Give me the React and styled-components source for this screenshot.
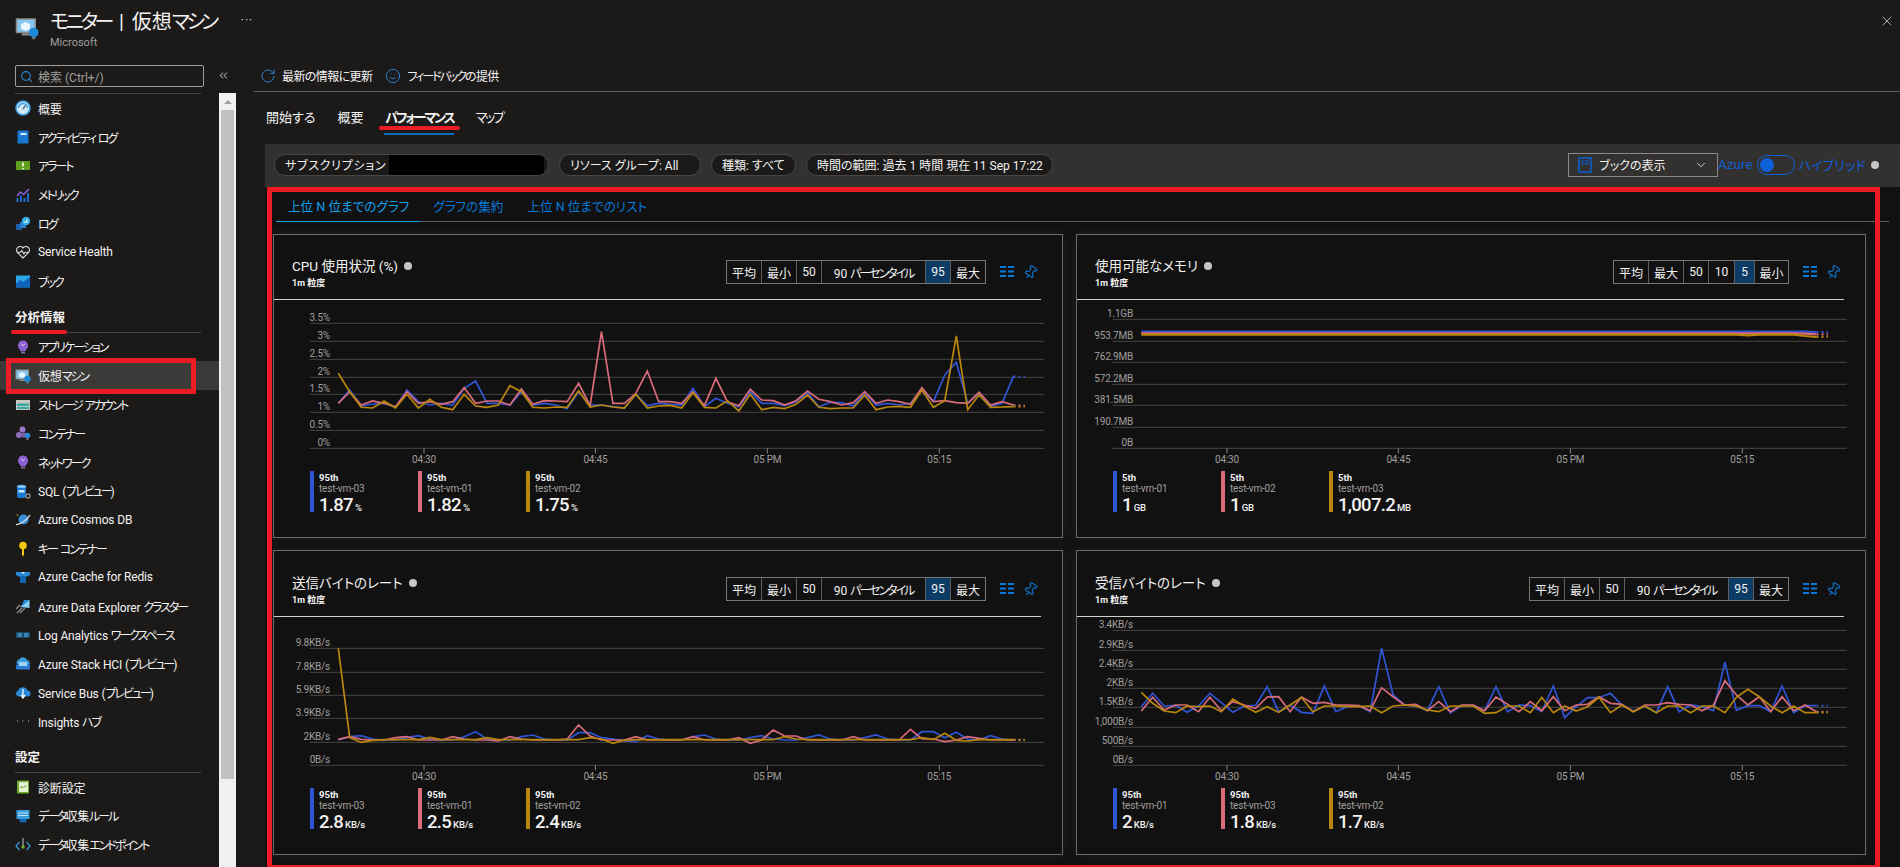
import React from 'react';
import styled, { createGlobalStyle } from 'styled-components';
import { X, ChevronDown, Search, RotateCw, Smile, Pin, ChevronsLeft } from 'lucide-react';

const GlobalStyle = createGlobalStyle`
  html, body { margin: 0; height: 100%; background: #1b1a19; overflow: hidden; }
  body {
    font-family: Roboto, "Noto Sans CJK JP", sans-serif;
    color: #f3f2f1;
    font-feature-settings: "palt";
  }
`;

const BLUE = '#2f55d4';
const PINK = '#d96b7b';
const GOLD = '#b8860b';

// Style
const Page = styled.div`
  display: flex;
  flex-direction: column;
  width: 1900px;
  height: 867px;
  overflow: hidden;
`;
const Kana = styled.span`
  letter-spacing: -0.17em;
`;
const Header = styled.header`
  display: flex;
  align-items: flex-start;
  height: 60px;
  box-sizing: border-box;
  padding: 8px 5px 0 15px;
`;
const HeaderIcon = styled.div`
  width: 24px;
  height: 28px;
  margin: 8px 11px 0 0;
`;
const Title = styled.h1`
  margin: 0;
  font-size: 20px;
  font-weight: 400;
  line-height: 28px;
  word-spacing: 3px;
  white-space: nowrap;
`;
const SubTitle = styled.div`
  font-size: 11px;
  line-height: 14px;
  color: #a19f9d;
`;
const More = styled.span`
  margin: 2px auto 0 25px;
  font-size: 12px;
  line-height: 20px;
  letter-spacing: 1px;
  color: #d2d0ce;
`;
const Close = styled(X)`
  margin-top: 5px;
  color: #d2d0ce;
`;
const Body = styled.div`
  display: flex;
  flex: 1;
  min-height: 0;
`;
const Sidebar = styled.aside`
  display: flex;
  flex-direction: column;
  width: 236px;
  flex: none;
`;
const SearchRow = styled.div`
  display: flex;
  align-items: flex-start;
  height: 33px;
  box-sizing: border-box;
  padding: 5px 0 0 15px;
`;
const SearchBox = styled.div`
  display: flex;
  align-items: center;
  gap: 5px;
  width: 189px;
  height: 22px;
  box-sizing: border-box;
  padding-left: 4px;
  border: 1px solid #a19f9d;
  border-radius: 2px;
  font-size: 12px;
  color: #a19f9d;
`;
const Collapse = styled(ChevronsLeft)`
  margin: 4px 0 0 13px;
  color: #8a8886;
`;
const SideBody = styled.div`
  display: flex;
  flex: 1;
  min-height: 0;
`;
const Nav = styled.nav`
  width: 219px;
  flex: none;
`;
const TopRule = styled.div`
  height: 1px;
  margin: 0 18px 0 15px;
  background: #484644;
`;
const NavItem = styled.div`
  position: relative;
  display: flex;
  align-items: center;
  gap: 7px;
  height: 28.8px;
  padding-left: 15px;
  font-size: 12px;
  letter-spacing: -0.15px;
  white-space: nowrap;
  background: ${p => (p.$selected ? '#3b3a39' : 'transparent')};
`;
const Section = styled.div`
  position: relative;
  display: flex;
  align-items: flex-end;
  height: 37px;
  margin: 0 18px 0 15px;
  padding-bottom: 6px;
  box-sizing: border-box;
  font-size: 12.5px;
  font-weight: 700;
  border-bottom: 1px solid #484644;
`;
const SectionMark = styled.span`
  position: absolute;
  left: -4px;
  bottom: -2px;
  width: 56px;
  height: 4px;
  border-radius: 2px;
  background: #ed1c24;
`;
const RedBox = styled.span`
  position: absolute;
  left: 6px;
  top: -3px;
  width: 190px;
  height: 36px;
  box-sizing: border-box;
  border: 5px solid #ed1c24;
`;
const Scrollbar = styled.div`
  position: relative;
  flex: 1;
  background: #f1f1f1;
`;
const ScrollArrow = styled.span`
  position: absolute;
  top: 7px;
  left: 5px;
  border: 4px solid transparent;
  border-top: 0;
  border-bottom: 4px solid #a3a3a3;
`;
const ScrollThumb = styled.div`
  position: absolute;
  top: 17px;
  left: 2px;
  width: 13px;
  height: 669px;
  background: #c1c1c1;
`;
const Main = styled.main`
  display: flex;
  flex: 1;
  flex-direction: column;
  min-width: 0;
`;
const Toolbar = styled.div`
  display: flex;
  align-items: center;
  height: 31px;
  margin-left: 18px;
  padding: 0 0 0 6px;
  border-bottom: 1px solid #605e5c;
  font-size: 12px;
`;
const ToolButton = styled.span`
  display: flex;
  align-items: center;
  gap: 6px;
  margin-right: 13px;
  letter-spacing: -0.6px;
  & svg { color: #2b88d8; }
`;
const TabRow = styled.div`
  display: flex;
  align-items: flex-start;
  gap: 22px;
  height: 52px;
  box-sizing: border-box;
  padding: 16px 0 0 30px;
  font-size: 13px;
`;
const Tab = styled.span`
  position: relative;
  display: block;
  line-height: 20px;
  font-weight: ${p => (p.$active ? 600 : 400)};
`;
const TabLine = styled.span`
  position: absolute;
  left: -1px;
  right: 0;
  top: 25px;
  height: 2px;
  background: #0f6cbd;
`;
const TabMark = styled.span`
  position: absolute;
  left: -6px;
  right: -6px;
  top: 18px;
  height: 4px;
  border-radius: 2px;
  background: #ed1c24;
`;
const Content = styled.div`
  display: flex;
  flex: 1;
  flex-direction: column;
  margin-left: 29px;
  min-height: 0;
`;
const FilterBar = styled.div`
  display: flex;
  align-items: center;
  height: 43px;
  flex: none;
  box-sizing: border-box;
  padding: 0 21px 2px 9px;
  background: #323130;
`;
const Pill = styled.span`
  display: flex;
  align-items: center;
  height: 22px;
  flex: none;
  box-sizing: border-box;
  margin-right: 10px;
  padding: 0 10px;
  width: ${p => p.$w}px;
  border: 1px solid #484644;
  border-radius: 11px;
  background: #1b1a19;
  font-size: 12px;
  letter-spacing: ${p => p.$ls || 0}px;
  white-space: nowrap;
  overflow: hidden;
`;
const Redacted = styled.span`
  flex: none;
  width: 155px;
  height: 22px;
  margin-left: auto;
  margin-right: -6px;
  background: #000;
`;
const BookSelect = styled.div`
  display: flex;
  align-items: center;
  flex: none;
  width: 150px;
  height: 24px;
  box-sizing: border-box;
  margin-left: auto;
  padding: 0 9px;
  border: 1px solid #8a8886;
  font-size: 12px;
  gap: 7px;
  & > svg:last-child { margin-left: auto; }
`;
const ModeLabel = styled.span`
  font-size: 13px;
  letter-spacing: 0.2px;
  color: #0f5fd6;
  white-space: nowrap;
`;
const Toggle = styled.span`
  display: flex;
  align-items: center;
  flex: none;
  width: 38px;
  height: 20px;
  box-sizing: border-box;
  margin: 0 4px;
  padding-left: 2px;
  border: 1px solid #0f5fd6;
  border-radius: 10px;
`;
const Knob = styled.span`
  width: 14px;
  height: 14px;
  border-radius: 50%;
  background: #0f5fd6;
`;
const Dot = styled.span`
  flex: none;
  width: 8px;
  height: 8px;
  margin-left: ${p => p.$gap}px;
  border-radius: 50%;
  background: #c8c6c4;
`;
const Panel = styled.section`
  position: relative;
  flex: 1;
  padding: 0 0 0 8px;
  background: #111;
`;
const RedFrame = styled.div`
  position: absolute;
  left: 2px;
  right: 20px;
  top: 0;
  bottom: -3px;
  border: 5px solid #ed1c24;
  pointer-events: none;
  z-index: 2;
`;
const SubTabs = styled.div`
  display: flex;
  height: 34px;
  margin: 0 11px 0 3px;
  border-bottom: 1px solid #605e5c;
  font-size: 12.6px;
`;
const SubTab = styled.span`
  position: relative;
  display: flex;
  align-items: center;
  padding: 2px 12px 0;
  color: ${p => (p.$active ? '#12a0e8' : '#0a78d6')};
  white-space: nowrap;
  ${p => p.$active && 'box-shadow: 0 1px 0 #12a0e8;'}
`;
const Grid = styled.div`
  display: grid;
  grid-template-columns: 1fr 1fr;
  grid-template-rows: 304px 305px;
  gap: 12px 13px;
  width: 1593px;
  margin-top: 12px;
`;
const Card = styled.article`
  display: flex;
  flex-direction: column;
  box-sizing: border-box;
  border: 1px solid #6a6a6a;
  background: #111;
  box-shadow: 0 0 12px rgba(255, 255, 255, 0.07);
`;
const CardHead = styled.div`
  display: flex;
  justify-content: space-between;
  height: ${p => p.$h}px;
  flex: none;
  margin-right: 21px;
  border-bottom: 1px solid #d0d0d0;
`;
const CardTitleBox = styled.div`
  padding: ${p => p.$h - 42}px 0 0 18px;
`;
const CardTitle = styled.div`
  display: flex;
  align-items: center;
  font-size: 13.5px;
  line-height: 18px;
`;
const Grain = styled.div`
  margin-top: 2px;
  font-size: 9px;
  font-weight: 700;
  line-height: 12px;
`;
const CardTools = styled.div`
  display: flex;
  align-items: center;
  align-self: flex-start;
  margin-top: ${p => p.$h - 39}px;
  padding-right: 3px;
`;
const Segs = styled.div`
  display: flex;
  height: 24px;
  box-sizing: border-box;
  border: 1px solid #797775;
  margin-right: 14px;
`;
const Seg = styled.span`
  display: flex;
  align-items: center;
  justify-content: center;
  box-sizing: border-box;
  width: ${p => p.$w}px;
  flex: none;
  font-size: 12px;
  white-space: nowrap;
  background: ${p => (p.$on ? '#0c3b66' : 'transparent')};
  & + & { border-left: 1px solid #605e5c; }
`;
const PinIcon = styled(Pin)`
  margin-left: 9px;
  color: #0f6cbd;
  transform: rotate(35deg);
`;
const ChartSvg = styled.svg`
  display: block;
  flex: none;
`;
const AxisText = styled.text`
  font-size: 10px;
  fill: #a19f9d;
  letter-spacing: -0.2px;
`;
const Legend = styled.div`
  display: flex;
  padding-left: 36px;
`;
const LegendItem = styled.div`
  display: flex;
  gap: 5px;
  width: 108px;
  height: 41px;
`;
const LegendBar = styled.span`
  width: 4px;
  background: ${p => p.$color};
`;
const LegendPct = styled.div`
  font-size: 9.5px;
  font-weight: 700;
  line-height: 11px;
  margin-top: 1px;
`;
const LegendName = styled.div`
  font-size: 10px;
  line-height: 11px;
  color: #a19f9d;
  letter-spacing: -0.2px;
`;
const LegendValue = styled.div`
  margin-top: 1px;
  font-size: 18.5px;
  font-weight: 500;
  line-height: 20px;
  letter-spacing: -0.7px;
  white-space: nowrap;
`;
const LegendUnit = styled.span`
  margin-left: 2px;
  font-size: 9.5px;
  letter-spacing: -0.2px;
`;

// Katakana runs get squeezed, the reference font sets them narrow
const Jp = ({ text }) =>
  text.split(/([ァ-ヶー]+)/).map((part, i) => (i % 2 ? <Kana key={i}>{part}</Kana> : part));

// Sidebar icons, drawn on a 16 box
const icons = {
  gauge: (
    <>
      <circle cx="8" cy="8" r="7" fill="#cfe8f8" stroke="#3a9bdc" strokeWidth="1.6" />
      <path d="M3.5 8a4.5 4.5 0 0 1 9 0" fill="none" stroke="#3a9bdc" strokeWidth="1.5" />
      <path d="M8 9l2.5-3.5" stroke="#666" strokeWidth="1.3" />
    </>
  ),
  book: (
    <>
      <rect x="2.5" y="1.5" width="11" height="13" rx="1" fill="#1b79d2" />
      <rect x="5.5" y="4" width="6" height="2" fill="#d5ecfb" />
    </>
  ),
  alert: (
    <>
      <rect x="1" y="3" width="14" height="9" fill="#5e9f1e" />
      <path d="M8 4.5v4M8 10v1.3" stroke="#fff" strokeWidth="1.5" />
    </>
  ),
  metric: (
    <>
      <path d="M2 9l3.5-4 3 2.5L14 2" fill="none" stroke="#8c5fd6" strokeWidth="1.6" />
      <path d="M2.5 15v-4M6 15V8.5M9.5 15v-4M13 15V6" stroke="#1b6fc2" strokeWidth="2" />
    </>
  ),
  log: (
    <>
      <rect x="1" y="8" width="6" height="6" fill="#1c5fa8" />
      <rect x="5" y="6" width="6" height="6" fill="#2b7cd3" />
      <circle cx="11" cy="5" r="4.2" fill="#34b0e6" />
      <path d="M10 7V5M12 7V3" stroke="#fff" strokeWidth="1" />
    </>
  ),
  heart: (
    <path
      d="M8 14L2.2 8.2A3.4 3.4 0 0 1 8 4a3.4 3.4 0 0 1 5.8 4.2L8 14zM2.5 8.3h3l1.3-1.8 2 3.2 1.2-1.4h3.5"
      fill="none"
      stroke="#e1dfdd"
      strokeWidth="1.1"
    />
  ),
  workbook: (
    <>
      <rect x="1" y="2.5" width="14" height="12" fill="#2aa7e8" />
      <path d="M1 11l4-4 3 2 7-5v10.500H1z" fill="#0f62b8" />
    </>
  ),
  bulb: (
    <>
      <path d="M8 1.500a5 5 0 0 1 3 9v1.500H5v-1.500a5 5 0 0 1 3-9z" fill="#8a5fd1" />
      <path d="M6 4.500l2 2.500 2-2.500" fill="none" stroke="#d9c8f2" strokeWidth="1" />
      <rect x="6" y="12.500" width="4" height="2" fill="#7a6a96" />
    </>
  ),
  vm: (
    <>
      <rect x="1" y="2" width="12.500" height="9" fill="#87c7ee" stroke="#8a8a8a" />
      <path d="M7 4l3 1.500v3L7 10 4 8.500v-3z" fill="#e9f6ff" />
      <rect x="4.500" y="11.500" width="5.500" height="1.500" fill="#8a8a8a" />
      <circle cx="12.500" cy="11" r="3.200" fill="#1b8ad6" />
      <rect x="11.500" y="14" width="2" height="1.500" fill="#777" />
    </>
  ),
  storage: (
    <>
      <rect x="1" y="3" width="14" height="10" fill="#c8c6c4" />
      <rect x="2" y="6.500" width="12" height="2.500" fill="#38a9a4" />
      <rect x="2" y="10" width="12" height="2" fill="#38a9a4" />
    </>
  ),
  containers: (
    <>
      <circle cx="7.500" cy="4.500" r="3" fill="#9a78c8" />
      <circle cx="4" cy="10" r="3" fill="#8e6cbc" />
      <circle cx="9" cy="10" r="2.600" fill="#7a5ca8" />
      <circle cx="12.500" cy="10.500" r="2.800" fill="#2b8ad6" />
      <rect x="11.500" y="13" width="2" height="2" fill="#777" />
    </>
  ),
  sql: (
    <>
      <path d="M2 3.500c0-2.300 9-2.300 9 0v10c0 2-9 2-9 0z" fill="#1b79d2" />
      <ellipse cx="6.500" cy="3.500" rx="4.500" ry="1.500" fill="#7fc4f0" />
      <rect x="3.500" y="7" width="6" height="2.500" fill="#cde8fb" />
      <circle cx="13" cy="13" r="2" fill="none" stroke="#8a8886" strokeWidth="1.400" />
    </>
  ),
  cosmos: (
    <>
      <circle cx="8.500" cy="7.500" r="5" fill="#3a8fd9" />
      <path d="M1 12.500C4 13 12 8.500 15 3" fill="none" stroke="#e1dfdd" strokeWidth="1.300" />
      <circle cx="2.500" cy="3" r=".8" fill="#dcc94a" />
    </>
  ),
  key: (
    <>
      <circle cx="8" cy="4.500" r="3.800" fill="#f2c811" />
      <path d="M7 7h2v7l-1 1.300L7 14z" fill="#f2c811" />
    </>
  ),
  redis: (
    <>
      <path d="M1 3h14v3l-4 2H5L1 6z" fill="#2b88d8" />
      <path d="M5 7h6v7H5z" fill="#1464b4" />
      <path d="M6 3l2 2 2-2" fill="#d5ecfb" />
    </>
  ),
  adx: (
    <>
      <path d="M5 9L14.500 1.500V10z" fill="#8ad0f5" />
      <path d="M9 2h5.500L6 9z" fill="#2b88d8" />
      <path d="M2 15l5-5M5 15l5-5M1 11l4-4" stroke="#8a8886" strokeWidth="1.400" />
    </>
  ),
  la: (
    <>
      <rect x="1" y="5" width="14" height="6" fill="#15466e" />
      <path d="M2.500 7h4.500M9 7h4.500M2.500 9h4.500M9 9h4.500" stroke="#6fbcec" strokeWidth="1" />
    </>
  ),
  hci: (
    <>
      <path d="M3 9a3 3 0 0 1 1-5.500A4.500 4.500 0 0 1 12 4a3 3 0 0 1 2 5z" fill="#3a9bdc" />
      <rect x="1" y="8.500" width="14" height="5" rx="1.200" fill="#2b7cd3" />
      <rect x="4" y="6" width="8" height="4" fill="#9fd4f5" />
    </>
  ),
  bus: (
    <>
      <path d="M3.500 11.500a3 3 0 0 1-.5-5.800A5 5 0 0 1 12.500 5.500a3 3 0 0 1 0 6z" fill="#2b88d8" />
      <path d="M8 4v8M6 10l2 3 2-3" fill="none" stroke="#e7f4fd" strokeWidth="1.400" />
    </>
  ),
  dots: (
    <path d="M2 8h1M7.500 8h1M13 8h1" stroke="#c8c6c4" strokeWidth="1.200" />
  ),
  diag: (
    <>
      <rect x="2" y="1.500" width="12" height="13" fill="#6fa82e" />
      <rect x="4" y="3" width="9" height="10" fill="#e4f0d2" />
      <path d="M5 9l2-1.500 1.500 1L11 6.500" fill="none" stroke="#5e9f1e" strokeWidth="1" />
    </>
  ),
  dcr: (
    <>
      <rect x="1.500" y="2" width="13" height="9" fill="#3a9bdc" />
      <path d="M3 5h10M3 7.500h10" stroke="#bfe3f8" strokeWidth="1" />
      <path d="M4 11l1 3.500h6l1-3.500z" fill="#1464b4" />
    </>
  ),
  endpoint: (
    <>
      <path d="M4.500 5L1 9l3.500 4M11.500 5L15 9l-3.500 4" fill="none" stroke="#3a9bdc" strokeWidth="1.200" />
      <path d="M8 1v9" stroke="#d2d0ce" strokeWidth="1" />
      <circle cx="8" cy="10" r="1.800" fill="#6fa82e" />
    </>
  ),
};

const NavIcon = ({ name, size = 16 }) => (
  <svg width={size} height={size} viewBox="0 0 16 16" style={{ flex: 'none' }}>
    {icons[name]}
  </svg>
);

const ListIcon = () => (
  <svg width="14" height="12" viewBox="0 0 14 12">
    <path d="M0 1h6M8 1h6M0 5.500h6M8 5.500h6M0 10h6M8 10h6" stroke="#0a78d6" strokeWidth="2.200" />
  </svg>
);

const BookIcon = () => (
  <svg width="14" height="16" viewBox="0 0 14 16">
    <path d="M1 1h12v14H1zM1 4H0M1 8H0M1 12H0" fill="none" stroke="#0f5fd6" strokeWidth="1.500" />
    <rect x="4" y="4" width="6" height="3" fill="none" stroke="#0f5fd6" />
  </svg>
);

const navTop = [
  ['gauge', '概要'],
  ['book', 'アクティビティ ログ'],
  ['alert', 'アラート'],
  ['metric', 'メトリック'],
  ['log', 'ログ'],
  ['heart', 'Service Health'],
  ['workbook', 'ブック'],
];
const navInsights = [
  ['bulb', 'アプリケーション'],
  ['vm', '仮想マシン', true],
  ['storage', 'ストレージ アカウント'],
  ['containers', 'コンテナー'],
  ['bulb', 'ネットワーク'],
  ['sql', 'SQL (プレビュー)'],
  ['cosmos', 'Azure Cosmos DB'],
  ['key', 'キー コンテナー'],
  ['redis', 'Azure Cache for Redis'],
  ['adx', 'Azure Data Explorer クラスター'],
  ['la', 'Log Analytics ワークスペース'],
  ['hci', 'Azure Stack HCI (プレビュー)'],
  ['bus', 'Service Bus (プレビュー)'],
  ['dots', 'Insights ハブ'],
];
const navSettings = [
  ['diag', '診断設定'],
  ['dcr', 'データ収集ルール'],
  ['endpoint', 'データ収集エンドポイント'],
];

const renderNav = items =>
  items.map(([icon, label, selected]) => (
    <NavItem key={label} $selected={selected}>
      <NavIcon name={icon} />
      <span><Jp text={label} /></span>
      {selected && <RedBox />}
    </NavItem>
  ));

// Chart data is kept in the y units it was read off at (3 per pixel)
const flat = (base, bumps) => Array.from({ length: 61 }, (_, i) => bumps[i] ?? base);

const cpuSeries = [
  [BLUE, [505,465,513,507,505,517,465,500,510,505,510,460,438,505,505,510,470,510,505,510,521,470,510,510,515,519,478,512,505,508,510,460,515,490,505,515,470,505,505,512,500,473,515,502,503,513,473,510,505,510,505,465,500,420,382,505,475,513,505,424,425]],
  [PINK, [505,470,510,498,505,515,470,505,500,508,500,458,505,498,498,510,462,508,497,498,500,445,512,290,505,505,475,408,500,500,505,470,512,430,500,512,463,495,497,510,497,468,493,500,510,503,470,505,495,500,508,458,500,497,503,505,472,510,500,510,512]],
  [GOLD, [415,470,517,519,498,519,478,519,493,517,524,478,513,517,510,452,470,517,519,516,517,467,516,510,516,519,478,519,513,511,519,473,517,519,497,528,478,524,517,521,508,480,517,521,519,519,480,524,516,514,517,465,517,497,303,524,480,517,516,515,515]],
];
const memSeries = [
  [BLUE, flat(290, { 59: 291, 60: 291 })],
  [PINK, flat(295, { 58: 296, 59: 298, 60: 298 })],
  [GOLD, flat(299, { 53: 301, 58: 303, 59: 306, 60: 305 })],
];
const sentSeries = [
  [BLUE, flat(585, { 1: 575, 2: 572, 3: 582, 6: 578, 7: 572, 8: 582, 11: 575, 12: 560, 13: 582, 16: 575, 17: 570, 18: 582, 21: 563, 22: 563, 23: 578, 24: 582, 25: 588, 26: 590, 27: 572, 28: 582, 31: 575, 32: 570, 33: 582, 36: 578, 37: 572, 38: 582, 41: 578, 42: 570, 43: 582, 46: 578, 47: 570, 48: 582, 51: 560, 52: 560, 53: 578, 54: 562, 55: 582, 57: 572, 58: 582 })],
  [PINK, flat(585, { 0: 583, 1: 575, 2: 583, 5: 578, 6: 575, 7: 585, 10: 575, 11: 582, 14: 588, 15: 575, 16: 582, 20: 582, 21: 540, 22: 573, 26: 575, 31: 575, 35: 578, 36: 595, 37: 585, 38: 555, 39: 573, 40: 573, 45: 575, 50: 553, 51: 582, 52: 582, 53: 590, 55: 575, 56: 580 })],
  [GOLD, flat(584, { 0: 310, 1: 578, 2: 592, 3: 586, 8: 577, 13: 578, 22: 578, 23: 582, 24: 595, 25: 586, 39: 575, 40: 582, 51: 578, 53: 565, 54: 586, 55: 588 })],
];
const recvSeries = [
  [BLUE, [485,445,483,481,502,483,445,473,502,483,481,425,500,480,502,505,423,500,485,482,500,310,450,480,483,497,425,503,482,480,497,425,500,480,482,500,423,518,485,458,458,445,480,498,484,503,425,500,480,485,497,352,496,482,482,500,423,503,482,482,482]],
  [PINK, [498,457,495,480,480,500,457,497,470,480,490,456,455,500,456,475,472,480,480,482,497,428,455,480,478,497,470,500,480,480,497,456,478,500,470,497,455,497,480,478,455,475,478,500,480,480,473,478,480,497,480,407,450,480,455,500,455,497,480,500,500]],
  [GOLD, [442,475,498,503,483,485,483,500,462,483,502,485,502,480,457,500,483,483,485,485,483,503,483,480,483,495,500,483,483,483,505,503,483,483,503,457,503,483,498,485,457,503,480,500,483,503,483,483,503,483,483,503,457,433,455,483,503,483,503,503,503]],
];

// The last minute isn't final yet, so that segment goes dashed
const LAST = 60;
const px = i => (126 + 22.43 * i) / 1.96;
const toPoints = (values, top, from, to) =>
  values
    .slice(from, to)
    .map((v, i) => `${px(i + from).toFixed(1)},${((v - top) / 3).toFixed(1)}`)
    .join(' ');

const TICKS = [['04:30', 150], ['04:45', 321.4], ['05 PM', 493.4], ['05:15', 665.3]];

const Chart = ({ top, grid, series, width }) => {
  const base = grid[grid.length - 1][1];
  const bottom = (base - top) / 3;
  return (
    <ChartSvg width="772" height="171" viewBox="0 0 772 171">
      {grid.map(([label, y]) => (
        <g key={label}>
          <line x1="35.700" x2="770" y1={(y - top) / 3} y2={(y - top) / 3} stroke="#484644" />
          <AxisText x="56" y={(y - top) / 3 - 4.500} textAnchor="end" dominantBaseline="middle">
            {label}
          </AxisText>
        </g>
      ))}
      {TICKS.map(([label, x]) => (
        <g key={label}>
          <line x1={x} x2={x} y1={bottom} y2={bottom + 5} stroke="#8a8886" />
          <AxisText x={x} y={bottom + 12} textAnchor="middle" dominantBaseline="middle">
            {label}
          </AxisText>
        </g>
      ))}
      {series.map(([color, values]) => (
        <g key={color} fill="none" stroke={color} strokeWidth={width}>
          <polyline points={toPoints(values, top, 0, LAST)} />
          <polyline points={toPoints(values, top, LAST - 1, LAST + 1)} strokeDasharray="2 3" />
        </g>
      ))}
    </ChartSvg>
  );
};

const SEG_SETS = {
  p95: [['平均', 34], ['最小', 35], ['50', 25], ['90 パーセンタイル', 104], ['95', 25, true], ['最大', 35]],
  p5: [['平均', 34], ['最大', 35], ['50', 25], ['10', 26], ['5', 20, true], ['最小', 34]],
};

const MetricCard = ({ head, title, segs, grid, series, top, legend, lineWidth = 1.7 }) => (
  <Card>
    <CardHead $h={head}>
      <CardTitleBox $h={head}>
        <CardTitle>
          {title}
          <Dot $gap={6} />
        </CardTitle>
        <Grain>1m 粒度</Grain>
      </CardTitleBox>
      <CardTools $h={head}>
        <Segs>
          {SEG_SETS[segs].map(([label, w, on]) => (
            <Seg key={label} $w={w} $on={on}><span><Jp text={label} /></span></Seg>
          ))}
        </Segs>
        <ListIcon />
        <PinIcon size={15} />
      </CardTools>
    </CardHead>
    <Chart top={top} grid={grid} series={series} width={lineWidth} />
    <Legend>
      {legend.map(([color, pct, name, value, unit]) => (
        <LegendItem key={name}>
          <LegendBar $color={color} />
          <div>
            <LegendPct>{pct}</LegendPct>
            <LegendName>{name}</LegendName>
            <LegendValue>
              {value}
              <LegendUnit>{unit}</LegendUnit>
            </LegendValue>
          </div>
        </LegendItem>
      ))}
    </Legend>
  </Card>
);

const App = () => (
  <Page>
    <GlobalStyle />
    <Header>
      <HeaderIcon>
        <NavIcon name="vm" size={24} />
      </HeaderIcon>
      <div>
        <Title><Jp text="モニター | 仮想マシン" /></Title>
        <SubTitle>Microsoft</SubTitle>
      </div>
      <More>···</More>
      <Close size={16} strokeWidth={1.2} />
    </Header>
    <Body>
      <Sidebar>
        <SearchRow>
          <SearchBox>
            <Search size={13} color="#2b88d8" />
            検索 (Ctrl+/)
          </SearchBox>
          <Collapse size={13} />
        </SearchRow>
        <SideBody>
          <Nav>
            <TopRule />
            {renderNav(navTop)}
            <Section>
              分析情報
              <SectionMark />
            </Section>
            {renderNav(navInsights)}
            <Section>設定</Section>
            {renderNav(navSettings)}
          </Nav>
          <Scrollbar>
            <ScrollArrow />
            <ScrollThumb />
          </Scrollbar>
        </SideBody>
      </Sidebar>
      <Main>
        <Toolbar>
          <ToolButton>
            <RotateCw size={16} strokeWidth={1.4} />
            <span>最新の情報に更新</span>
          </ToolButton>
          <ToolButton>
            <Smile size={16} strokeWidth={1.4} />
            <span><Jp text="フィードバックの提供" /></span>
          </ToolButton>
        </Toolbar>
        <TabRow>
          <Tab>開始する</Tab>
          <Tab>概要</Tab>
          <Tab $active>
            <Jp text="パフォーマンス" />
            <TabMark />
            <TabLine />
          </Tab>
          <Tab><Jp text="マップ" /></Tab>
        </TabRow>
        <Content>
          <FilterBar>
            <Pill $w={275} $ls={0.7}>
              サブスクリプション
              <Redacted />
            </Pill>
            <Pill $w={142}>リソース グループ: All</Pill>
            <Pill $w={85}>種類: すべて</Pill>
            <Pill $w={247}>時間の範囲: 過去 1 時間 現在 11 Sep 17:22</Pill>
            <BookSelect>
              <BookIcon />
              ブックの表示
              <ChevronDown size={14} strokeWidth={1.4} />
            </BookSelect>
            <ModeLabel>Azure</ModeLabel>
            <Toggle>
              <Knob />
            </Toggle>
            <ModeLabel>ハイブリッド</ModeLabel>
            <Dot $gap={5} />
          </FilterBar>
          <Panel>
            <RedFrame />
            <SubTabs>
              <SubTab $active>上位 N 位までのグラフ</SubTab>
              <SubTab>グラフの集約</SubTab>
              <SubTab>上位 N 位までのリスト</SubTab>
            </SubTabs>
            <Grid>
              <MetricCard
                head={64}
                title="CPU 使用状況 (%)"
                segs="p95"
                top={195}
                series={cpuSeries}
                grid={[['3.5%', 265], ['3%', 319], ['2.5%', 373], ['2%', 427], ['1.5%', 478], ['1%', 532], ['0.5%', 586], ['0%', 640]]}
                legend={[
                  [BLUE, '95th', 'test-vm-03', '1.87', '%'],
                  [PINK, '95th', 'test-vm-01', '1.82', '%'],
                  [GOLD, '95th', 'test-vm-02', '1.75', '%'],
                ]}
              />
              <MetricCard
                head={64}
                title="使用可能なメモリ"
                segs="p5"
                top={195}
                lineWidth={2.2}
                series={memSeries}
                grid={[['1.1GB', 253], ['953.7MB', 319], ['762.9MB', 382], ['572.2MB', 448], ['381.5MB', 511], ['190.7MB', 577], ['0B', 640]]}
                legend={[
                  [BLUE, '5th', 'test-vm-01', '1', 'GB'],
                  [PINK, '5th', 'test-vm-02', '1', 'GB'],
                  [GOLD, '5th', 'test-vm-03', '1,007.2', 'MB'],
                ]}
              />
              <MetricCard
                head={65}
                title="送信バイトのレート"
                segs="p95"
                top={216}
                series={sentSeries}
                grid={[['9.8KB/s', 310], ['7.8KB/s', 382], ['5.9KB/s', 451], ['3.9KB/s', 520], ['2KB/s', 592], ['0B/s', 661]]}
                legend={[
                  [BLUE, '95th', 'test-vm-03', '2.8', 'KB/s'],
                  [PINK, '95th', 'test-vm-01', '2.5', 'KB/s'],
                  [GOLD, '95th', 'test-vm-02', '2.4', 'KB/s'],
                ]}
              />
              <MetricCard
                head={65}
                title="受信バイトのレート"
                segs="p95"
                top={216}
                series={recvSeries}
                grid={[['3.4KB/s', 256], ['2.9KB/s', 316], ['2.4KB/s', 373], ['2KB/s', 430], ['1.5KB/s', 487], ['1,000B/s', 547], ['500B/s', 604], ['0B/s', 661]]}
                legend={[
                  [BLUE, '95th', 'test-vm-01', '2', 'KB/s'],
                  [PINK, '95th', 'test-vm-03', '1.8', 'KB/s'],
                  [GOLD, '95th', 'test-vm-02', '1.7', 'KB/s'],
                ]}
              />
            </Grid>
          </Panel>
        </Content>
      </Main>
    </Body>
  </Page>
);

export default App;
